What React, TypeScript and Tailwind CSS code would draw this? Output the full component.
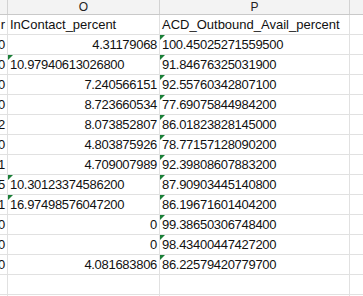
import React from "react";

type Row = { l: string; o: string; oText: boolean; p: string };

const rows: Row[] = [
  { l: "0", o: "4.31179068", oText: false, p: "100.45025271559500" },
  { l: "0", o: "10.97940613026800", oText: true, p: "91.84676325031900" },
  { l: "0", o: "7.240566151", oText: false, p: "92.55760342807100" },
  { l: "0", o: "8.723660534", oText: false, p: "77.69075844984200" },
  { l: "2", o: "8.073852807", oText: false, p: "86.01823828145000" },
  { l: "0", o: "4.803875926", oText: false, p: "78.77157128090200" },
  { l: "1", o: "4.709007989", oText: false, p: "92.39808607883200" },
  { l: "5", o: "10.30123374586200", oText: true, p: "87.90903445140800" },
  { l: "1", o: "16.97498576047200", oText: true, p: "86.19671601404200" },
  { l: "0", o: "0", oText: false, p: "99.38650306748400" },
  { l: "0", o: "0", oText: false, p: "98.43400447427200" },
  { l: "0", o: "4.081683806", oText: false, p: "86.22579420779700" },
];

const Tri = () => (
  <svg className="absolute left-0 top-0" width="5" height="5" viewBox="0 0 5 5">
    <polygon points="0,0 5,0 0,5" fill="#1a7f37" />
  </svg>
);

const font = { fontFamily: '"Liberation Sans", Arial, sans-serif' };

export default function App() {
  return (
    <div
      className="w-[363px] h-[296px] overflow-hidden bg-white text-[#111] text-[13px]"
      style={font}
    >
      {/* column header */}
      <div className="flex h-[15px] bg-[#f3f3f3] border-b border-[#c9c9c9] text-[12px] leading-[14px] text-[#222]">
        <div className="w-[8px] shrink-0 border-r border-[#d2d2d2]" />
        <div className="w-[152px] shrink-0 border-r border-[#d2d2d2] flex justify-center">O</div>
        <div className="w-[190px] shrink-0 border-r border-[#d2d2d2] flex justify-center">P</div>
        <div className="flex-1" />
      </div>

      {/* field names */}
      <div className="flex h-[20px] border-b border-[#e1e1e1] leading-[19px]">
        <div className="w-[8px] shrink-0 border-r border-[#e1e1e1] overflow-hidden flex justify-end pr-[2px]">
          <span className="whitespace-nowrap">r</span>
        </div>
        <div className="w-[152px] shrink-0 border-r border-[#e1e1e1] pl-[2px] whitespace-nowrap overflow-hidden">
          InContact_percent
        </div>
        <div className="w-[190px] shrink-0 border-r border-[#e1e1e1] pl-[2px] whitespace-nowrap overflow-hidden">
          ACD_Outbound_Avail_percent
        </div>
        <div className="flex-1" />
      </div>

      {rows.map((r, i) => (
        <div key={i} className="flex h-[20px] border-b border-[#e1e1e1] leading-[19px] tracking-[-0.3px]">
          <div className="w-[8px] shrink-0 border-r border-[#e1e1e1] overflow-hidden flex justify-end pr-[2px]">
            <span className="whitespace-nowrap">{r.l}</span>
          </div>
          {r.oText ? (
            <div className="relative w-[152px] shrink-0 border-r border-[#e1e1e1] pl-[2px] whitespace-nowrap overflow-hidden">
              <Tri />
              {r.o}
            </div>
          ) : (
            <div className="w-[152px] shrink-0 border-r border-[#e1e1e1] pr-[2px] flex justify-end whitespace-nowrap overflow-hidden">
              {r.o}
            </div>
          )}
          <div className="relative w-[190px] shrink-0 border-r border-[#e1e1e1] pl-[2px] whitespace-nowrap overflow-hidden">
            <Tri />
            {r.p}
          </div>
          <div className="flex-1" />
        </div>
      ))}

      {[0, 1].map((i) => (
        <div key={"b" + i} className="flex h-[20px] border-b border-[#e1e1e1]">
          <div className="w-[8px] shrink-0 border-r border-[#e1e1e1]" />
          <div className="w-[152px] shrink-0 border-r border-[#e1e1e1]" />
          <div className="w-[190px] shrink-0 border-r border-[#e1e1e1]" />
          <div className="flex-1" />
        </div>
      ))}
    </div>
  );
}
